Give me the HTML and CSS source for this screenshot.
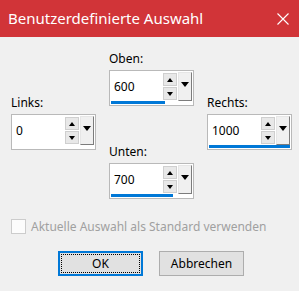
FILE: index.html
```html
<!DOCTYPE html>
<html lang="de">
  <head>
    <meta charset="UTF-8">
    <title>Benutzerdefinierte Auswahl</title>
    <link rel="stylesheet" href="styles.css">
  </head>
  <body>
    <div class="titlebar">
      <span class="title">Benutzerdefinierte Auswahl</span>
      <svg class="close" width="12" height="12" viewBox="0 0 12 12">
        <path d="M0.5 0.5 L11.5 11.5 M11.5 0.5 L0.5 11.5" stroke="#fff" stroke-width="1.1" fill="none"/>
      </svg>
    </div>

    <div class="content">
      <div class="fields">
        <div class="field field-top">
          <div class="label">Oben:</div>
          <div class="spin">
            <div class="spin-row">
              <span class="value">600</span>
              <div class="arrows">
                <span class="arrow-btn"><i class="tri-up"></i></span>
                <span class="arrow-btn"><i class="tri-down"></i></span>
              </div>
              <div class="drop"><i class="tri-drop"></i></div>
            </div>
            <div class="bar" style="width: 54px"></div>
          </div>
        </div>

        <div class="field field-left">
          <div class="label">Links:</div>
          <div class="spin">
            <div class="spin-row">
              <span class="value">0</span>
              <div class="arrows">
                <span class="arrow-btn"><i class="tri-up"></i></span>
                <span class="arrow-btn"><i class="tri-down"></i></span>
              </div>
              <div class="drop"><i class="tri-drop"></i></div>
            </div>
            <div class="bar" style="width: 0px"></div>
          </div>
        </div>

        <div class="field field-right">
          <div class="label">Rechts:</div>
          <div class="spin">
            <div class="spin-row">
              <span class="value">1000</span>
              <div class="arrows">
                <span class="arrow-btn"><i class="tri-up"></i></span>
                <span class="arrow-btn"><i class="tri-down"></i></span>
              </div>
              <div class="drop"><i class="tri-drop"></i></div>
            </div>
            <div class="bar" style="width: 81px"></div>
          </div>
        </div>

        <div class="field field-bottom">
          <div class="label">Unten:</div>
          <div class="spin">
            <div class="spin-row">
              <span class="value">700</span>
              <div class="arrows">
                <span class="arrow-btn"><i class="tri-up"></i></span>
                <span class="arrow-btn"><i class="tri-down"></i></span>
              </div>
              <div class="drop"><i class="tri-drop"></i></div>
            </div>
            <div class="bar" style="width: 62px"></div>
          </div>
        </div>
      </div>

      <div class="check-row">
        <span class="checkbox"></span>
        <span class="check-label">Aktuelle Auswahl als Standard verwenden</span>
      </div>

      <div class="buttons">
        <button class="btn btn-default"><span class="focus">OK</span></button>
        <button class="btn">Abbrechen</button>
      </div>
    </div>
  </body>
</html>
```

FILE: styles.css
```css
html {
  font-family: "Noto Sans", "Open Sans", sans-serif;
}

body {
  margin: 0;
  width: 299px;
  height: 291px;
  background-color: #f0f0f0;
  overflow: hidden;
}

.titlebar {
  display: flex;
  align-items: center;
  justify-content: space-between;
  height: 37px;
  padding: 0 10px 0 8px;
  background-color: #d13438;
  color: white;
}

.title {
  font-size: 15px;
  padding-bottom: 1px;
}

.content {
  font-size: 12px;
  color: #000;
}

/* the four spin fields sit on a 3x3 grid */
.fields {
  display: grid;
  grid-template-columns: 85px 85px 85px;
  grid-template-rows: 44px 49px 54px;
  column-gap: 13px;
  margin-top: 15px;
  padding-left: 11px;
}

.field {
  align-self: start;
}

.field-top {
  grid-column: 2;
  grid-row: 1 / span 2;
}

.field-left {
  grid-column: 1;
  grid-row: 2 / span 2;
}

.field-right {
  grid-column: 3;
  grid-row: 2 / span 2;
}

.field-bottom {
  grid-column: 2;
  grid-row: 3;
}

.label {
  line-height: 14px;
  margin-bottom: 4px;
}

.spin {
  display: flex;
  flex-direction: column;
  width: 85px;
  height: 36px;
  box-sizing: border-box;
  padding: 1px;
  border: 1px solid #b9b9b9;
  background-color: #fff;
}

.spin-row {
  display: flex;
  height: 29px;
}

.value {
  flex: 1;
  padding-left: 3px;
  line-height: 30px;
}

.arrows {
  display: flex;
  flex-direction: column;
  gap: 1px;
  margin-top: 1px;
  margin-right: 1px;
}

.arrow-btn {
  display: flex;
  align-items: center;
  justify-content: center;
  width: 14px;
  height: 13px;
  box-sizing: border-box;
  border: 1px solid #cfcfcf;
  background-color: #e8e8e8;
}

.tri-up {
  border-left: 3px solid transparent;
  border-right: 3px solid transparent;
  border-bottom: 4px solid #000;
}

.tri-down {
  border-left: 3px solid transparent;
  border-right: 3px solid transparent;
  border-top: 4px solid #000;
}

.drop {
  display: flex;
  justify-content: center;
  width: 14px;
  height: 29px;
  box-sizing: border-box;
  padding-top: 9px;
  border: 1px solid;
  border-color: #e6e6e6 #7c7c7c #7c7c7c #e6e6e6;
  background-color: #f0f0f0;
}

.tri-drop {
  width: 0;
  height: 0;
  border-left: 4px solid transparent;
  border-right: 4px solid transparent;
  border-top: 5px solid #000;
}

.bar {
  height: 3px;
  background-color: #0078d7;
}

.check-row {
  display: flex;
  align-items: center;
  margin-top: 19px;
  padding-left: 11px;
  height: 16px;
}

.checkbox {
  width: 15px;
  height: 15px;
  box-sizing: border-box;
  border: 1px solid #cccccc;
  background-color: #fcfcfc;
}

.check-label {
  margin-left: 5px;
  padding-top: 1px;
  color: #a0a0a0;
}

.buttons {
  display: flex;
  gap: 16px;
  margin-top: 17px;
  padding-left: 58px;
}

.btn {
  display: flex;
  align-items: center;
  justify-content: center;
  width: 85px;
  height: 25px;
  box-sizing: border-box;
  padding: 0;
  border: 1px solid #adadad;
  background-color: #e1e1e1;
  font-family: inherit;
  font-size: 12px;
  color: #000;
}

.btn-default {
  border: 2px solid #0078d7;
  padding: 1px;
}

.btn-default .focus {
  display: flex;
  align-items: center;
  justify-content: center;
  width: 100%;
  height: 100%;
  box-sizing: border-box;
  border: 1px dotted #000;
}
```
